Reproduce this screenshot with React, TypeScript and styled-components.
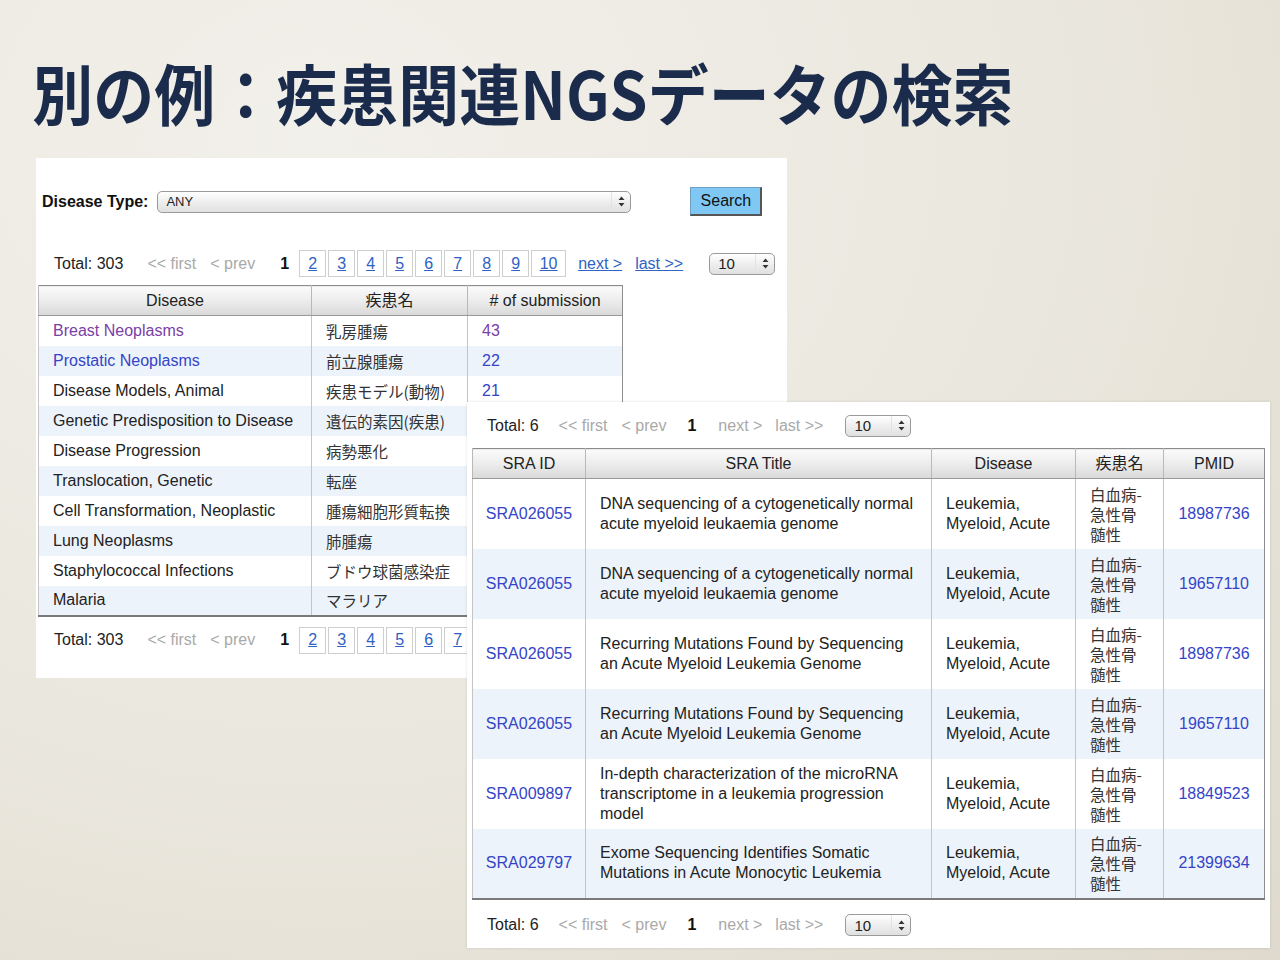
import React from "react";
import styled, { createGlobalStyle } from "styled-components";

const GlobalStyle = createGlobalStyle`
    html, body {
        margin: 0;
        padding: 0;
    }
    body {
        font-family: "Liberation Sans", Arial, "Noto Sans CJK JP", sans-serif;
        color: #222;
    }
`;

const palette = {
    title: "#1b2b4b",
    link: "#3444c8",
    visited: "#7a40a6",
    pageLink: "#2f62c4",
    muted: "#a9a9a9",
    stripe: "#edf3fb",
    border: "#8c8c8c",
    divider: "#c4c4c4",
};

const Slide = styled.div`
    position: relative;
    width: 1280px;
    height: 960px;
    overflow: hidden;
    background: radial-gradient(ellipse at 25% 15%, #f2f0ea 0%, #eae7de 55%, #dfdacd 100%);
`;

const Title = styled.h1`
    margin: 0;
    padding: 55px 0 0 35px;
    font-family: "Noto Sans CJK JP", sans-serif;
    font-weight: 700;
    font-size: 66px;
    line-height: 1.1;
    color: ${palette.title};
    white-space: nowrap;
    transform: scaleX(0.924);
    transform-origin: left top;
`;

/* the two screenshots lie on the slide like windows, the second over the first */
const Window = styled.div<{ $left: number; $top: number; $width: number; $height: number; $front?: boolean }>`
    position: absolute;
    left: ${(p) => p.$left}px;
    top: ${(p) => p.$top}px;
    width: ${(p) => p.$width}px;
    height: ${(p) => p.$height}px;
    background: #fff;
    box-sizing: border-box;
    display: flex;
    flex-direction: column;
    z-index: ${(p) => (p.$front ? 2 : 1)};
    box-shadow: ${(p) => (p.$front ? "0 0 3px rgba(0, 0, 0, 0.12)" : "none")};
`;

const SearchRow = styled.div`
    display: flex;
    align-items: center;
    height: 29px;
    margin: 29px 0 0 6px;
`;

const Label = styled.span`
    font-weight: 700;
    font-size: 16px;
    color: #111;
    margin-right: 9px;
`;

const SelectBox = styled.div<{ $width: number; $size: number }>`
    display: flex;
    align-items: center;
    justify-content: space-between;
    width: ${(p) => p.$width}px;
    height: 22px;
    box-sizing: border-box;
    border: 1px solid #9a9a9a;
    border-radius: 5px;
    background: linear-gradient(#ffffff, #f0f0f0 45%, #e0e0e0);
    padding: 0 5px 0 8px;
    font-size: ${(p) => p.$size}px;
    color: #222;
`;

const SelectArrows = styled.span`
    display: flex;
    align-items: center;
    height: 100%;
    padding-left: 6px;
    border-left: 1px solid #e2e2e2;
`;

const SearchButton = styled.button`
    margin-left: 59px;
    width: 72px;
    height: 29px;
    border: 1px solid #6f9fc2;
    border-right: 2px solid #555;
    border-bottom: 2px solid #555;
    background: #80c8f4;
    font-family: "Liberation Sans", Arial, sans-serif;
    font-size: 16px;
    color: #111;
    padding: 0;
`;

const Pager = styled.div<{ $indent: number; $top: number }>`
    display: flex;
    align-items: center;
    height: 27px;
    margin: ${(p) => p.$top}px 0 0 ${(p) => p.$indent}px;
    font-size: 16px;
    white-space: nowrap;
`;

const Total = styled.span<{ $gap: number }>`
    color: #222;
    margin-right: ${(p) => p.$gap}px;
`;

const NavGroup = styled.span<{ $left?: number; $gap: number }>`
    display: flex;
    gap: ${(p) => p.$gap}px;
    margin-left: ${(p) => p.$left ?? 0}px;
`;

const NavText = styled.span<{ $active?: boolean }>`
    color: ${(p) => (p.$active ? palette.pageLink : palette.muted)};
    text-decoration: ${(p) => (p.$active ? "underline" : "none")};
`;

const CurrentPage = styled.span<{ $before: number; $after: number }>`
    font-weight: 700;
    color: #111;
    margin: 0 ${(p) => p.$after}px 0 ${(p) => p.$before}px;
`;

const PageBoxes = styled.span`
    display: flex;
    gap: 2px;
`;

const PageBox = styled.span<{ $wide?: boolean }>`
    display: flex;
    align-items: center;
    justify-content: center;
    width: ${(p) => (p.$wide ? 35 : 27)}px;
    height: 27px;
    box-sizing: border-box;
    border: 1px solid #cfcfcf;
    color: ${palette.pageLink};
    text-decoration: underline;
`;

const SizeSelect = styled.span<{ $left: number }>`
    margin-left: ${(p) => p.$left}px;
`;

const Table = styled.table<{ $left: number; $top: number; $width: number }>`
    border-collapse: collapse;
    width: ${(p) => p.$width}px;
    margin: ${(p) => p.$top}px 0 0 ${(p) => p.$left}px;
    border: 1px solid ${palette.border};
    border-bottom: 2px solid #7a7a7a;
    font-size: 16px;
    table-layout: fixed;
`;

const HeadCell = styled.th<{ $width: number }>`
    width: ${(p) => p.$width}px;
    height: 30px;
    box-sizing: border-box;
    padding: 0;
    font-weight: 400;
    line-height: 20px;
    color: #222;
    text-align: center;
    background: linear-gradient(#fbfbfb, #ececec 50%, #d9d9d9);
    border-left: 1px solid #b8b8b8;
    border-bottom: 1px solid #999;
`;

const Row = styled.tr<{ $striped: boolean; $height: number }>`
    height: ${(p) => p.$height}px;
    background: ${(p) => (p.$striped ? palette.stripe : "#fff")};
`;

const Cell = styled.td<{ $center?: boolean; $tone?: "link" | "visited" }>`
    padding: 0 8px 0 ${(p) => (p.$center ? 8 : 14)}px;
    text-align: ${(p) => (p.$center ? "center" : "left")};
    vertical-align: middle;
    line-height: 20px;
    overflow: hidden;
    white-space: ${(p) => (p.$center ? "nowrap" : "normal")};
    border-left: 1px solid ${palette.divider};
    color: ${(p) => (p.$tone === "link" ? palette.link : p.$tone === "visited" ? palette.visited : "#222")};
`;

const JaCell = styled(Cell)`
    padding-right: 14px;
    font-family: "Noto Sans CJK JP", sans-serif;
    font-size: 15.5px;
    color: #333;
    white-space: nowrap;
`;

const WrapJaCell = styled(JaCell)`
    white-space: normal;
`;

const Arrows = () => (
    <svg width="7" height="11" viewBox="0 0 7 11">
        <path d="M3.5 0.5 L6.5 4 H0.5 Z" fill="#333" />
        <path d="M3.5 10.5 L6.5 7 H0.5 Z" fill="#333" />
    </svg>
);

const Select = ({ value, width, size }: { value: string; width: number; size: number }) => (
    <SelectBox $width={width} $size={size}>
        <span>{value}</span>
        <SelectArrows>
            <Arrows />
        </SelectArrows>
    </SelectBox>
);

interface PagerBarProps {
    total: number;
    indent: number;
    top: number;
    totalGap: number;
    beforeCurrent: number;
    afterCurrent: number;
    pages?: number[];
    hasMore?: boolean;
    selectGap: number;
}

const PagerBar = ({
    total,
    indent,
    top,
    totalGap,
    beforeCurrent,
    afterCurrent,
    pages = [],
    hasMore = false,
    selectGap,
}: PagerBarProps) => (
    <Pager $indent={indent} $top={top}>
        <Total $gap={totalGap}>Total: {total}</Total>
        <NavGroup $gap={14}>
            <NavText>&lt;&lt; first</NavText>
            <NavText>&lt; prev</NavText>
        </NavGroup>
        <CurrentPage $before={beforeCurrent} $after={afterCurrent}>
            1
        </CurrentPage>
        {pages.length > 0 && (
            <PageBoxes>
                {pages.map((n) => (
                    <PageBox key={n} $wide={n >= 10}>
                        {n}
                    </PageBox>
                ))}
            </PageBoxes>
        )}
        <NavGroup $left={pages.length ? 12 : 0} $gap={13}>
            <NavText $active={hasMore}>next &gt;</NavText>
            <NavText $active={hasMore}>last &gt;&gt;</NavText>
        </NavGroup>
        <SizeSelect $left={selectGap}>
            <Select value="10" width={66} size={15} />
        </SizeSelect>
    </Pager>
);

const diseases: { en: string; ja: string; count?: number; tone?: "link" | "visited" }[] = [
    { en: "Breast Neoplasms", ja: "乳房腫瘍", count: 43, tone: "visited" },
    { en: "Prostatic Neoplasms", ja: "前立腺腫瘍", count: 22, tone: "link" },
    { en: "Disease Models, Animal", ja: "疾患モデル(動物)", count: 21 },
    { en: "Genetic Predisposition to Disease", ja: "遺伝的素因(疾患)" },
    { en: "Disease Progression", ja: "病勢悪化" },
    { en: "Translocation, Genetic", ja: "転座" },
    { en: "Cell Transformation, Neoplastic", ja: "腫瘍細胞形質転換" },
    { en: "Lung Neoplasms", ja: "肺腫瘍" },
    { en: "Staphylococcal Infections", ja: "ブドウ球菌感染症" },
    { en: "Malaria", ja: "マラリア" },
];

const TITLE_DNA = "DNA sequencing of a cytogenetically normal acute myeloid leukaemia genome";
const TITLE_RECUR = "Recurring Mutations Found by Sequencing an Acute Myeloid Leukemia Genome";

const submissions = [
    { id: "SRA026055", title: TITLE_DNA, pmid: "18987736" },
    { id: "SRA026055", title: TITLE_DNA, pmid: "19657110" },
    { id: "SRA026055", title: TITLE_RECUR, pmid: "18987736" },
    { id: "SRA026055", title: TITLE_RECUR, pmid: "19657110" },
    {
        id: "SRA009897",
        title: "In-depth characterization of the microRNA transcriptome in a leukemia progression model",
        pmid: "18849523",
    },
    { id: "SRA029797", title: "Exome Sequencing Identifies Somatic Mutations in Acute Monocytic Leukemia", pmid: "21399634" },
];

const PAGES = [2, 3, 4, 5, 6, 7, 8, 9, 10];

const DiseasePager = ({ top }: { top: number }) => (
    <PagerBar
        total={303}
        indent={18}
        top={top}
        totalGap={24}
        beforeCurrent={25}
        afterCurrent={10}
        pages={PAGES}
        hasMore
        selectGap={26}
    />
);

const SubmissionPager = ({ top }: { top: number }) => (
    <PagerBar total={6} indent={20} top={top} totalGap={20} beforeCurrent={21} afterCurrent={22} selectGap={22} />
);

const DiseaseWindow = () => (
    <Window $left={36} $top={158} $width={751} $height={520}>
        <SearchRow>
            <Label>Disease Type:</Label>
            <Select value="ANY" width={474} size={13} />
            <SearchButton>Search</SearchButton>
        </SearchRow>
        <DiseasePager top={34} />
        <Table $left={2} $top={8} $width={584}>
            <thead>
                <tr>
                    <HeadCell $width={273}>Disease</HeadCell>
                    <HeadCell $width={156}>疾患名</HeadCell>
                    <HeadCell $width={155}># of submission</HeadCell>
                </tr>
            </thead>
            <tbody>
                {diseases.map((d, i) => (
                    <Row key={d.en} $striped={i % 2 === 1} $height={30}>
                        <Cell $tone={d.tone}>{d.en}</Cell>
                        <JaCell>{d.ja}</JaCell>
                        <Cell $tone={d.tone === "visited" ? "visited" : "link"}>{d.count}</Cell>
                    </Row>
                ))}
            </tbody>
        </Table>
        <DiseasePager top={10} />
    </Window>
);

const SubmissionWindow = () => (
    <Window $left={467} $top={402} $width={803} $height={546} $front>
        <SubmissionPager top={10} />
        <Table $left={5} $top={9} $width={792}>
            <thead>
                <tr>
                    <HeadCell $width={113}>SRA ID</HeadCell>
                    <HeadCell $width={346}>SRA Title</HeadCell>
                    <HeadCell $width={144}>Disease</HeadCell>
                    <HeadCell $width={88}>疾患名</HeadCell>
                    <HeadCell $width={101}>PMID</HeadCell>
                </tr>
            </thead>
            <tbody>
                {submissions.map((s, i) => (
                    <Row key={s.pmid + i} $striped={i % 2 === 1} $height={70}>
                        <Cell $center $tone="link">
                            {s.id}
                        </Cell>
                        <Cell>{s.title}</Cell>
                        <Cell>Leukemia, Myeloid, Acute</Cell>
                        <WrapJaCell>白血病-急性骨髄性</WrapJaCell>
                        <Cell $center $tone="link">
                            {s.pmid}
                        </Cell>
                    </Row>
                ))}
            </tbody>
        </Table>
        <SubmissionPager top={12} />
    </Window>
);

export default function App() {
    return (
        <Slide>
            <GlobalStyle />
            <Title>別の例：疾患関連NGSデータの検索</Title>
            <DiseaseWindow />
            <SubmissionWindow />
        </Slide>
    );
}
